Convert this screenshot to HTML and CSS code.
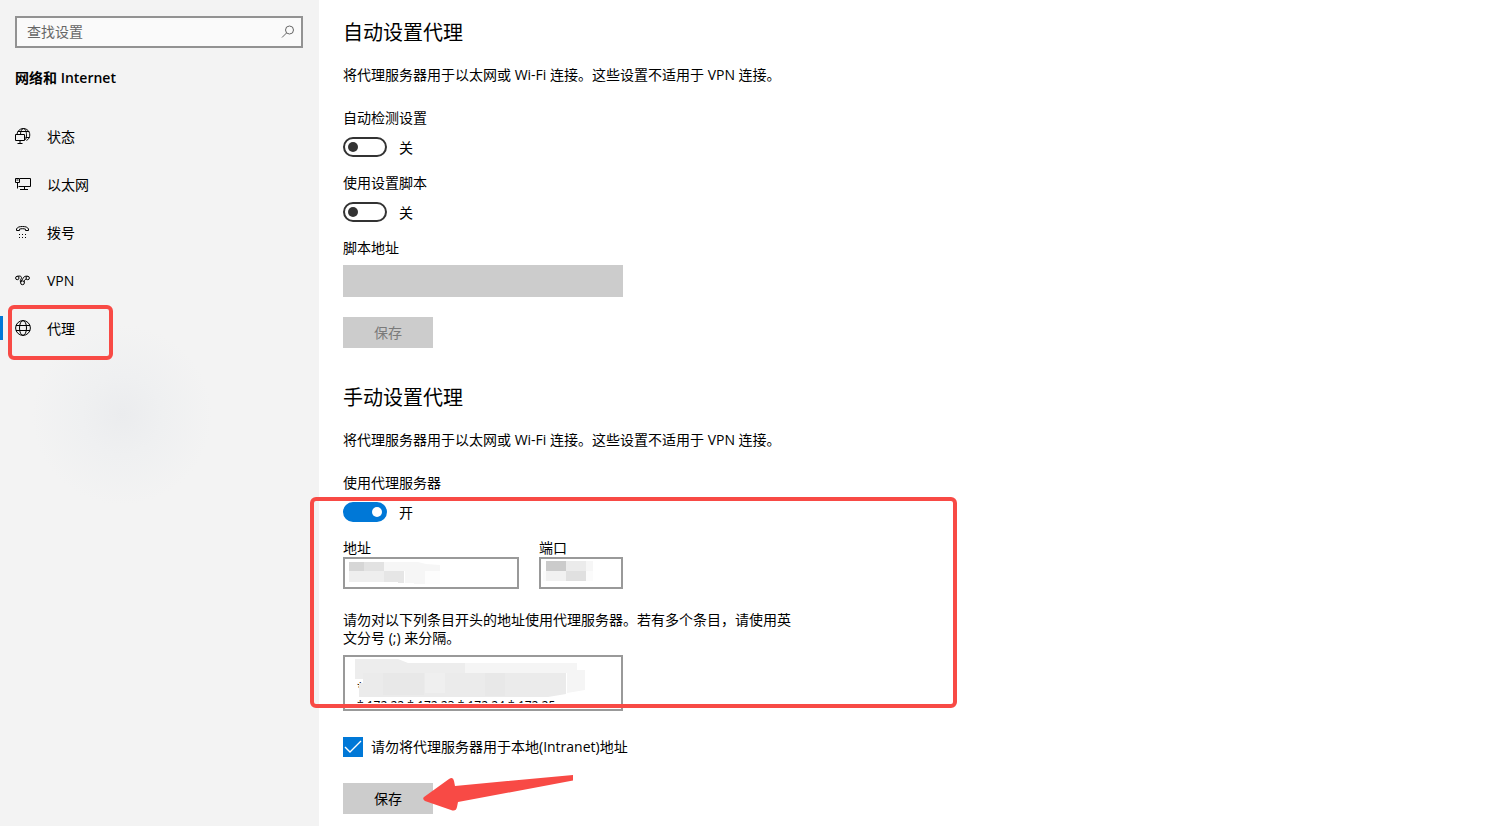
FILE: index.html
```html
<!DOCTYPE html>
<html lang="zh-CN">
<head>
  <meta charset="UTF-8">
  <meta name="viewport" content="width=device-width, initial-scale=1">
  <title>设置 - 代理</title>
  <link rel="stylesheet" href="styles.css">
</head>

<body>

<!-- Sidebar -->
<aside class="sidebar">
  <div class="search-box">
    <input type="search" placeholder="查找设置" aria-label="查找设置">
    <svg class="search-icon" width="14" height="14" viewBox="0 0 14 14">
      <circle cx="8.5" cy="5" r="4"/>
      <path d="M5.5 8L1 12.5"/>
    </svg>
  </div>
  <h2 class="sidebar-title">网络和 Internet</h2>

  <nav class="nav-list">
    <a class="nav-item" href="#">
      <svg class="icon" width="16" height="16" viewBox="0 0 16 16">
        <path d="M2 6.500a6.400 6.400 0 1 1 9.500 6M5.500 6.500C5.500 3 6.800.6 8.500.6s3 2.900 3 6.200c0 2-.3 3.700-1 5M2.800 3.500h11.400M10.500 9.500h4"/>
        <path d="M.5 6.500h9v6h-9zM5 12.500v3M2.500 15.500h5"/>
      </svg>
      <span>状态</span>
    </a>
    <a class="nav-item" href="#">
      <svg class="icon" width="16" height="16" viewBox="0 0 16 16">
        <path d="M5 2.500h10.500v8H3.500M.5 2.500h4v4h-4zM2.500 6.500v6M9.500 10.500v3M5 13.500h8"/>
        <path d="M1.500 4h2"/>
      </svg>
      <span>以太网</span>
    </a>
    <a class="nav-item" href="#">
      <svg class="icon" width="16" height="16" viewBox="0 0 16 16">
        <path d="M1.500 6.500V5C2.500 3 4.500 2.500 7.500 2.500S12.500 3 13.500 5v1.500h-3V5.200c-1.800-.7-4.200-.7-6 0v1.300z"/>
        <path class="dots" d="M4 10h1v1H4zM7 10h1v1H7zM10 10h1v1h-1zM4 13h1v1H4zM7 13h1v1H7zM10 13h1v1h-1z"/>
      </svg>
      <span>拨号</span>
    </a>
    <a class="nav-item" href="#">
      <svg class="icon" width="16" height="16" viewBox="0 0 16 16">
        <circle cx="2.300" cy="6" r="1.700"/>
        <circle cx="12.700" cy="6" r="1.700"/>
        <circle cx="7.500" cy="10.800" r="1.900"/>
        <path d="M2.300 4.300c2.400-.6 4.200-.2 4.200 1.400C6.500 7.400 4.500 7.600 5.600 10.500M12.700 4.300c-2.400-.6-3.700.3-4.700 2L6 9.500M11.500 7.200c-2 .3-2.600 1.300-2.100 3.300"/>
      </svg>
      <span>VPN</span>
    </a>
    <a class="nav-item active" href="#" aria-current="page">
      <svg class="icon" width="16" height="16" viewBox="0 0 16 16">
        <circle cx="8" cy="8" r="7.400"/>
        <ellipse cx="8" cy="8" rx="3.500" ry="7.400"/>
        <path d="M1 5.500h14M1 10.500h14"/>
      </svg>
      <span>代理</span>
      <div class="mark mark-nav"></div>
    </a>
  </nav>
</aside>

<!-- Content -->
<main class="content">
  <section>
    <h1>自动设置代理</h1>
    <p class="desc">将代理服务器用于以太网或 Wi-Fi 连接。这些设置不适用于 VPN 连接。</p>

    <div class="toggle-group">
      <label for="auto-detect">自动检测设置</label>
      <div class="toggle-row">
        <input type="checkbox" role="switch" class="toggle" id="auto-detect">
        <span>关</span>
      </div>
    </div>

    <div class="toggle-group">
      <label for="use-script">使用设置脚本</label>
      <div class="toggle-row">
        <input type="checkbox" role="switch" class="toggle" id="use-script">
        <span>关</span>
      </div>
    </div>

    <div class="field script-field">
      <label for="script-url">脚本地址</label>
      <input type="text" id="script-url" disabled>
    </div>
    <button class="save-btn" disabled>保存</button>
  </section>

  <section>
    <h1>手动设置代理</h1>
    <p class="desc">将代理服务器用于以太网或 Wi-Fi 连接。这些设置不适用于 VPN 连接。</p>

    <div class="manual">
      <div class="toggle-group">
        <label for="use-proxy">使用代理服务器</label>
        <div class="toggle-row">
          <input type="checkbox" role="switch" class="toggle" id="use-proxy" checked>
          <span>开</span>
        </div>
      </div>

      <div class="server-row">
        <div class="field address">
          <label for="proxy-address">地址</label>
          <div class="input-wrap">
            <input type="text" id="proxy-address">
            <svg class="mosaic" width="176" height="32" viewBox="0 0 176 32">
              <path fill="#f6f6f6" d="M41 5h34l8 2 14 1v6H83v13H71v-1h-9V14H41z"/>
              <path fill="#d6d6d6" d="M6 5h15v9H6z"/>
              <path fill="#e2e2e2" d="M21 5h20v9H21z"/>
              <path fill="#eeeeee" d="M6 14h35v11H6z"/>
              <path fill="#e6e6e6" d="M41 14h20v12h-6v-1H41z"/>
              <path fill="#fdfdfd" d="M82 14h15v13H82z"/>
            </svg>
          </div>
        </div>
        <div class="field port">
          <label for="proxy-port">端口</label>
          <div class="input-wrap">
            <input type="text" id="proxy-port">
            <svg class="mosaic" width="84" height="32" viewBox="0 0 84 32">
              <path fill="#cbcbcb" d="M7 4h20v10H7z"/>
              <path fill="#ebebeb" d="M27 4h20v10H27z"/>
              <path fill="#f6f6f6" d="M47 4h7v10h-7z"/>
              <path fill="#f1f1f1" d="M7 14h20v10H7z"/>
              <path fill="#e0e0e0" d="M27 14h20v10H27z"/>
              <path fill="#fbfbfb" d="M47 14h7v10h-7zM4 14h3v10H4z"/>
            </svg>
          </div>
        </div>
      </div>

      <div class="field bypass-field">
        <label for="bypass">请勿对以下列条目开头的地址使用代理服务器。若有多个条目，请使用英文分号 (;) 来分隔。</label>
        <div class="bypass-box">
          <textarea id="bypass">

*
*;172.22.*;172.23.*;172.24.*;172.25</textarea>
          <svg class="mosaic" width="280" height="56" viewBox="0 0 280 56">
            <path fill="#ededed" d="M12 4h43l10 4h57v10H20v6h-8z"/>
            <path fill="#f5f5f5" d="M122 8h112v7h8v20l-18 3V18H122z"/>
            <path fill="#ebebeb" d="M20 18h203v21l-18 3H16V28h4z"/>
            <path fill="#e8e8e8" d="M40 18h41v22H40zM142 18h20v23h-20z"/>
            <path fill="#efefef" d="M82 18h20v20H82z"/>
          </svg>
        </div>
      </div>
      <div class="mark mark-manual"></div>
    </div>

    <label class="check-row">
      <input type="checkbox" class="check" checked>
      <span>请勿将代理服务器用于本地(Intranet)地址</span>
    </label>

    <div class="save-row">
      <button class="save-btn">保存</button>
      <svg class="arrow" width="152" height="38" viewBox="0 0 152 38">
        <path d="M1 22L26 4q4-3 5 2l1 5L150 0v5.500L35 27l-1 5q-1 5-6 3L2 26q-3-2-1-4z"/>
      </svg>
    </div>
  </section>
</main>

</body>
</html>
```
FILE: styles.css
```css
* {
  box-sizing: border-box;
}
body {
  margin: 0;
  display: flex;
  min-height: 100vh;
  background-color: #fff;
  color: #000;
  font-family: 'Open Sans', 'Noto Sans CJK SC', sans-serif;
  font-size: 14px;
  line-height: 18px;
}
input, textarea, button {
  font: inherit;
  color: inherit;
}
label {
  display: block;
}

/* Sidebar */
.sidebar {
  flex: 0 0 319px;
  padding-top: 16px;
  background: radial-gradient(circle at 122px 415px, #ebecee 0, #eff0f1 40px, #f3f3f3 90px);
}
.search-box {
  display: flex;
  align-items: center;
  height: 32px;
  margin: 0 16px 0 15px;
  padding: 0 6px 0 10px;
  border: 2px solid #929292;
  background-color: #fafafa;
}
.search-box input {
  flex: 1;
  min-width: 0;
  padding: 0;
  border: none;
  outline: none;
  background: none;
}
.search-box input::placeholder {
  color: #666;
}
.search-icon {
  fill: none;
  stroke: #666;
}
.sidebar-title {
  margin: 21px 15px 25px;
  font-size: 14px;
  font-weight: 600;
}
.nav-list {
  display: flex;
  flex-direction: column;
}
.nav-item {
  position: relative;
  display: flex;
  align-items: center;
  gap: 16px;
  height: 48px;
  padding-left: 15px;
  color: #000;
  text-decoration: none;
}
.nav-item.active::before {
  content: '';
  position: absolute;
  left: 0;
  top: 12px;
  width: 3px;
  height: 24px;
  background-color: #0078d7;
}
.nav-item span, .toggle-row span {
  padding-top: 2px;
}
.icon {
  fill: none;
  stroke: #000;
}
.icon .dots {
  fill: #000;
  stroke: none;
}

/* Content */
.content {
  flex: 1;
  min-width: 0;
  padding: 18px 24px 12px;
}
section + section {
  margin-top: 35px;
}
h1 {
  margin: 0 0 18px;
  font-size: 20px;
  font-weight: 400;
  line-height: 30px;
}
.desc {
  margin: 0 0 25px;
}
.toggle-group {
  margin-bottom: 17px;
}
.toggle-row {
  display: flex;
  align-items: center;
  gap: 12px;
  height: 20px;
  margin-top: 10px;
}
.toggle {
  appearance: none;
  display: flex;
  align-items: center;
  width: 44px;
  height: 20px;
  margin: 0;
  padding: 0 3px;
  border: 2px solid #333;
  border-radius: 10px;
}
.toggle::before {
  content: '';
  width: 10px;
  height: 10px;
  border-radius: 50%;
  background-color: #333;
}
.toggle:checked {
  justify-content: flex-end;
  border-color: #0078d7;
  background-color: #0078d7;
}
.toggle:checked::before {
  background-color: #fff;
}
.field input {
  display: block;
  width: 100%;
  height: 32px;
  padding: 0 10px;
  border: 2px solid #999;
  background-color: #fff;
}
.field input:disabled {
  border-color: #ccc;
  background-color: #ccc;
}
.script-field {
  max-width: 280px;
  margin-bottom: 20px;
}
.script-field input {
  margin-top: 8px;
}
.save-btn {
  display: block;
  width: 90px;
  height: 31px;
  padding: 0;
  border: none;
  background-color: #ccc;
}
.save-btn:disabled {
  color: #7a7a7a;
}

/* Manual proxy */
.manual {
  position: relative;
}
.server-row {
  display: flex;
  gap: 20px;
  max-width: 280px;
}
.address {
  flex: 1;
}
.port {
  width: 84px;
}
.input-wrap {
  position: relative;
}
.mosaic {
  position: absolute;
  left: 0;
  top: 0;
  pointer-events: none;
}
.bypass-field {
  max-width: 450px;
  margin-top: 22px;
}
.bypass-box {
  position: relative;
  max-width: 280px;
  height: 56px;
  margin-top: 8px;
  border: 2px solid #999;
}
.bypass-box .mosaic {
  left: -2px;
  top: -2px;
}
.bypass-box textarea {
  display: block;
  width: 100%;
  height: 46px;
  padding: 4px 10px 0 12px;
  border: none;
  outline: none;
  resize: none;
  overflow: hidden;
  background: none;
  font-size: 12px;
  white-space: pre;
}
.check-row {
  display: flex;
  align-items: center;
  gap: 8px;
  margin: 26px 0;
}
.check {
  appearance: none;
  width: 20px;
  height: 20px;
  margin: 0;
  background: #0078d7 url("data:image/svg+xml,%3Csvg xmlns='http://www.w3.org/2000/svg' viewBox='0 0 20 20'%3E%3Cpath d='M2 10l5 5L18 4' fill='none' stroke='white' stroke-width='1.400'/%3E%3C/svg%3E");
}
.save-row {
  position: relative;
}

/* Highlights */
.mark {
  position: absolute;
  border: 4px solid #f84a45;
  border-radius: 6px;
  pointer-events: none;
}
.mark-nav {
  left: 8px;
  top: 1px;
  width: 105px;
  height: 55px;
}
.mark-manual {
  left: -33px;
  top: 23px;
  width: 647px;
  height: 211px;
}
.arrow {
  position: absolute;
  left: 80px;
  top: -8px;
  fill: #f84a45;
}
```
